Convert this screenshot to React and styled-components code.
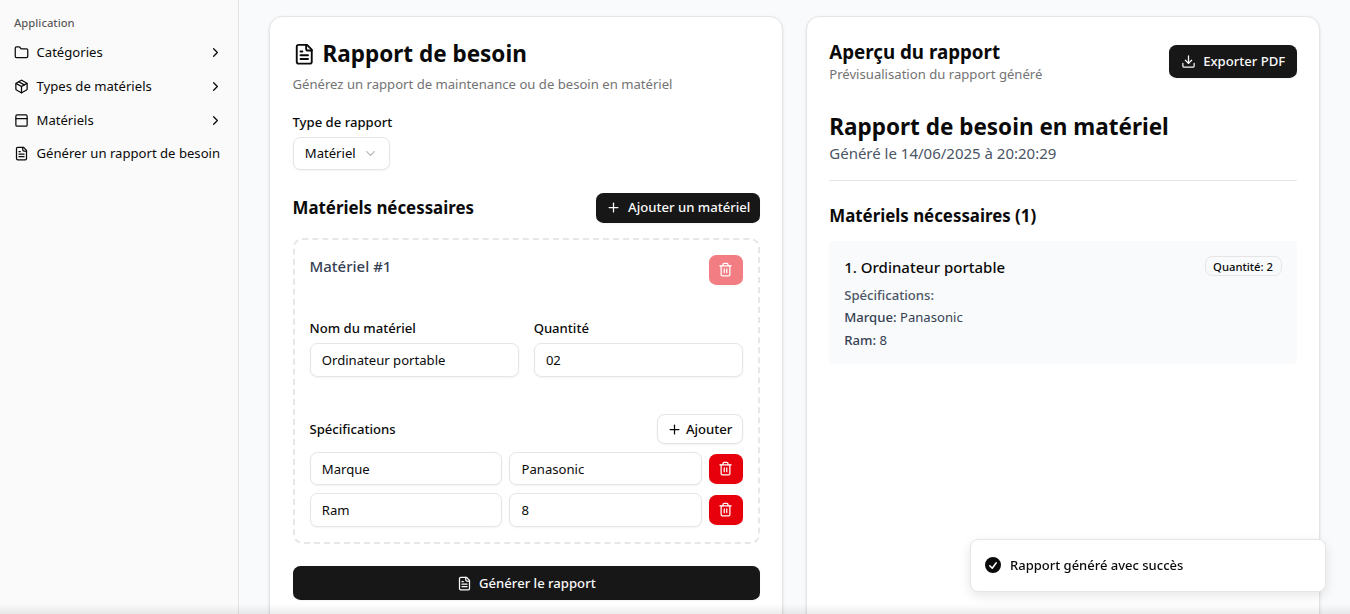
import React from 'react';
import styled, { createGlobalStyle, css } from 'styled-components';
import { ChevronDown, ChevronRight, Download, Folder, Package, PanelTop, Plus, Trash2 } from 'lucide-react';

const GlobalStyle = createGlobalStyle`
  html { font-size: 15px; }
  *, *::before, *::after { box-sizing: border-box; }
  body {
    margin: 0;
    height: 100vh;
    overflow: hidden;
    background: #f9fafb;
    color: #0a0a0a;
    font-family: "Noto Sans", sans-serif;
    font-size: 1rem;
    line-height: 1.5;
  }
  h1, h2, h3, h4, p { margin: 0; }
  button, input { font: inherit; color: inherit; }
  svg { display: block; flex-shrink: 0; }
`;

const Shell = styled.div`
  display: flex;
  height: 100vh;
  overflow: hidden;
`;

const Sidebar = styled.aside`
  width: 239px;
  flex-shrink: 0;
  padding: 0.5rem 0.5rem 0 6.5px;
  background: #fafafa;
  border-right: 1px solid #e5e5e5;
`;

const GroupLabel = styled.div`
  display: flex;
  align-items: center;
  height: 2rem;
  padding: 0 0.5rem;
  font-size: 0.75rem;
  line-height: 1rem;
  font-weight: 500;
  color: rgba(10, 10, 10, 0.7);
`;

const Menu = styled.nav`
  display: flex;
  flex-direction: column;
  gap: 0.25rem;
`;

const MenuItem = styled.a`
  display: flex;
  align-items: center;
  gap: 0.5rem;
  height: 2rem;
  padding: 0 0.5rem;
  font-size: 0.875rem;
  line-height: 1.25rem;
  white-space: nowrap;
  & > svg:nth-of-type(2) { margin-left: auto; }
`;

const Main = styled.main`
  flex: 1;
  min-width: 0;
  display: grid;
  grid-template-columns: 1fr 1fr;
  gap: 1.5rem;
  padding: 15.6px 2rem 0;
`;

const Card = styled.section`
  display: flex;
  flex-direction: column;
  height: 720px;
  padding: 1.5rem;
  background: #fff;
  border: 1px solid #e5e5e5;
  border-radius: calc(0.625rem + 4px);
  box-shadow: 0 1px 3px rgba(0, 0, 0, 0.1), 0 1px 2px -1px rgba(0, 0, 0, 0.1);
`;

const Row = styled.div`
  display: flex;
  align-items: ${(p) => p.$align || 'center'};
  justify-content: space-between;
`;

const PageTitle = styled.h1`
  display: flex;
  align-items: center;
  gap: 0.5rem;
  font-size: 1.5rem;
  line-height: 2rem;
  font-weight: 700;
`;

const Muted = styled.p`
  font-size: 0.875rem;
  line-height: 1.25rem;
  color: #737373;
`;

const Intro = styled(Muted)`
  margin: 0.375rem 0 1.5rem;
`;

const Label = styled.label`
  display: block;
  font-size: 0.875rem;
  line-height: 1;
  font-weight: 500;
`;

const control = css`
  height: 2.25rem;
  padding: 0 0.75rem;
  font-size: 0.875rem;
  background: #fff;
  border: 1px solid #e5e5e5;
  border-radius: calc(0.625rem - 2px);
  box-shadow: 0 1px 2px rgba(0, 0, 0, 0.05);
`;

const Input = styled.input`
  ${control}
  display: block;
  width: 100%;
  min-width: 0;
  outline: none;
`;

const Select = styled.button`
  ${control}
  display: flex;
  align-items: center;
  align-self: flex-start;
  gap: 0.5rem;
  margin: 0.5rem 0 1.5rem;
  svg { color: #737373; opacity: 0.5; }
`;

const SectionTitle = styled.h2`
  font-size: 1.125rem;
  line-height: 1.75rem;
  font-weight: 700;
`;

const tones = {
  dark: css`background: #171717; color: #fafafa;`,
  danger: css`background: #e7000b; color: #fff;`,
  outline: css`background: #fff; color: #0a0a0a; border: 1px solid #e5e5e5;`,
};

const Button = styled.button`
  display: flex;
  align-items: center;
  justify-content: center;
  gap: ${(p) => p.$gap || '0.5rem'};
  flex-shrink: 0;
  height: ${(p) => (p.$small ? '2rem' : '2.25rem')};
  padding: 0 ${(p) => (p.$small ? '0.625rem' : '0.75rem')};
  border: 0;
  border-radius: calc(0.625rem - 2px);
  box-shadow: 0 1px 2px rgba(0, 0, 0, 0.05);
  font-size: 0.875rem;
  line-height: 1.25rem;
  font-weight: 500;
  white-space: nowrap;
  ${(p) => tones[p.$tone || 'dark']}
  &:disabled { opacity: 0.5; }
`;

const MaterialBox = styled.div`
  margin: 1rem 0 1.5rem;
  padding: 1rem;
  border: 2px dashed #e5e7eb;
  border-radius: 0.625rem;
`;

const MaterialName = styled.h3`
  font-size: 1rem;
  line-height: 1.5rem;
  font-weight: 500;
  color: #364153;
`;

const Fields = styled.div`
  display: grid;
  grid-template-columns: 1fr 1fr;
  gap: 1rem;
  margin: 2.5rem 0;
`;

const Field = styled.div`
  display: flex;
  flex-direction: column;
  gap: 0.5rem;
`;

const SpecRow = styled.div`
  display: flex;
  align-items: center;
  gap: 0.5rem;
  margin-top: 0.5rem;
`;

const PreviewHeader = styled(Row)`
  margin-bottom: 1.875rem;
`;

const PreviewTitle = styled.h2`
  font-size: 1.25rem;
  line-height: 1.75rem;
  font-weight: 700;
`;

const ReportHead = styled.div`
  padding-bottom: 1rem;
  margin-bottom: 1.5rem;
  border-bottom: 1px solid #e5e5e5;
`;

const ReportTitle = styled.h1`
  font-size: 1.5rem;
  line-height: 2rem;
  font-weight: 700;
`;

const ReportDate = styled.p`
  color: #4a5565;
`;

const ReportItem = styled.article`
  margin-top: 0.75rem;
  padding: 1rem;
  background: #f9fafb;
  border-radius: 0.25rem;
`;

const ItemName = styled.h4`
  font-size: 1rem;
  font-weight: 500;
`;

const Badge = styled.span`
  padding: 0.125rem 0.5rem;
  border: 1px solid #e5e5e5;
  border-radius: calc(0.625rem - 2px);
  font-size: 0.75rem;
  line-height: 1rem;
  font-weight: 500;
`;

const Specs = styled.div`
  display: flex;
  flex-direction: column;
  gap: 0.25rem;
  margin-top: 0.5rem;
  font-size: 0.875rem;
  line-height: 1.25rem;
  color: #364153;
`;

const Medium = styled.span`
  font-weight: 500;
  color: ${(p) => p.$color || 'inherit'};
`;

const Toast = styled.div`
  position: fixed;
  right: 24px;
  bottom: 22px;
  display: flex;
  align-items: center;
  gap: 7px;
  width: 356px;
  height: 53px;
  padding: 0 16px 0 12px;
  background: #fff;
  border: 1px solid #e5e5e5;
  border-radius: 8px;
  box-shadow: 0 4px 12px rgba(0, 0, 0, 0.1);
  font-size: 13px;
  font-weight: 500;
  will-change: transform;
  svg { margin-bottom: 1px; }
`;

const BottomShade = styled.div`
  position: fixed;
  left: 0;
  right: 0;
  bottom: 0;
  height: 10px;
  background: linear-gradient(to bottom, rgba(0, 0, 0, 0), rgba(0, 0, 0, 0.07));
  pointer-events: none;
`;

const FileText = ({ size = '1rem' }) => (
  <svg style={{ width: size, height: size }} viewBox="0 0 24 24" fill="none" stroke="currentColor" strokeWidth="2" strokeLinecap="round" strokeLinejoin="round">
    <path d="M15 2H6a2 2 0 0 0-2 2v16a2 2 0 0 0 2 2h12a2 2 0 0 0 2-2V7Z" />
    <path d="M14 2v4a2 2 0 0 0 2 2h4" />
    <path d="M10 9H8" />
    <path d="M16 13H8" />
    <path d="M16 17H8" />
  </svg>
);

const CheckDisc = () => (
  <svg width="20" height="20" viewBox="0 0 20 20" fill="currentColor">
    <path fillRule="evenodd" clipRule="evenodd" d="M10 18a8 8 0 100-16 8 8 0 000 16zm3.857-9.809a.75.75 0 00-1.214-.882l-3.483 4.79-1.88-1.88a.75.75 0 10-1.06 1.061l2.5 2.5a.75.75 0 001.137-.089l4-5.5z" />
  </svg>
);

const navItems = [
  { label: 'Catégories', Icon: Folder },
  { label: 'Types de matériels', Icon: Package },
  { label: 'Matériels', Icon: PanelTop },
];

const specs = [
  { name: 'Marque', value: 'Panasonic' },
  { name: 'Ram', value: '8' },
];

export default function App() {
  return (
    <>
      <GlobalStyle />
      <Shell>
        <Sidebar>
          <GroupLabel>Application</GroupLabel>
          <Menu>
            {navItems.map(({ label, Icon }) => (
              <MenuItem key={label}>
                <Icon size="1rem" />
                {label}
                <ChevronRight size="1rem" />
              </MenuItem>
            ))}
            <MenuItem>
              <FileText />
              Générer un rapport de besoin
            </MenuItem>
          </Menu>
        </Sidebar>
        <Main>
          <Card>
            <PageTitle><FileText size="1.5rem" />Rapport de besoin</PageTitle>
            <Intro>Générez un rapport de maintenance ou de besoin en matériel</Intro>
            <Label>Type de rapport</Label>
            <Select>Matériel<ChevronDown size="1rem" /></Select>
            <Row>
              <SectionTitle>Matériels nécessaires</SectionTitle>
              <Button $small><Plus size="1rem" />Ajouter un matériel</Button>
            </Row>
            <MaterialBox>
              <Row $align="flex-start">
                <MaterialName>Matériel #1</MaterialName>
                <Button $small $tone="danger" disabled><Trash2 size="1rem" /></Button>
              </Row>
              <Fields>
                <Field>
                  <Label>Nom du matériel</Label>
                  <Input defaultValue="Ordinateur portable" />
                </Field>
                <Field>
                  <Label>Quantité</Label>
                  <Input defaultValue="02" />
                </Field>
              </Fields>
              <Row>
                <Label>Spécifications</Label>
                <Button $small $tone="outline" $gap="0.25rem"><Plus size="1rem" />Ajouter</Button>
              </Row>
              {specs.map((s) => (
                <SpecRow key={s.name}>
                  <Input defaultValue={s.name} />
                  <Input defaultValue={s.value} />
                  <Button $small $tone="danger"><Trash2 size="1rem" /></Button>
                </SpecRow>
              ))}
            </MaterialBox>
            <Button><FileText />Générer le rapport</Button>
          </Card>
          <Card>
            <PreviewHeader>
              <div>
                <PreviewTitle>Aperçu du rapport</PreviewTitle>
                <Muted>Prévisualisation du rapport généré</Muted>
              </div>
              <Button><Download size="1rem" />Exporter PDF</Button>
            </PreviewHeader>
            <ReportHead>
              <ReportTitle>Rapport de besoin en matériel</ReportTitle>
              <ReportDate>Généré le 14/06/2025 à 20:20:29</ReportDate>
            </ReportHead>
            <SectionTitle>Matériels nécessaires (1)</SectionTitle>
            <ReportItem>
              <Row $align="flex-start">
                <ItemName>1. Ordinateur portable</ItemName>
                <Badge>Quantité: 2</Badge>
              </Row>
              <Specs>
                <Medium $color="#4a5565">Spécifications:</Medium>
                {specs.map((s) => (
                  <div key={s.name}><Medium>{s.name}:</Medium> {s.value}</div>
                ))}
              </Specs>
            </ReportItem>
          </Card>
        </Main>
      </Shell>
      <Toast><CheckDisc />Rapport généré avec succès</Toast>
      <BottomShade />
    </>
  );
}
